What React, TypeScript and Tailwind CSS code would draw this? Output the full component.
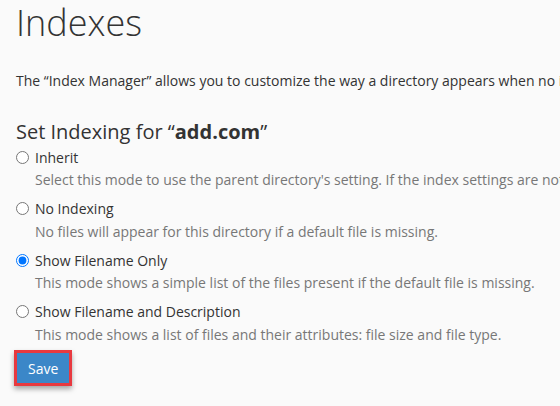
import { useState } from 'react'

const modes = [
    {
        id: 'inherit',
        label: 'Inherit',
        desc: "Select this mode to use the parent directory's setting. If the index settings are not defined in the parent directory, the system will use its default settings.",
    },
    {
        id: 'none',
        label: 'No Indexing',
        desc: 'No files will appear for this directory if a default file is missing.',
    },
    {
        id: 'filename',
        label: 'Show Filename Only',
        desc: 'This mode shows a simple list of the files present if the default file is missing.',
    },
    {
        id: 'description',
        label: 'Show Filename and Description',
        desc: 'This mode shows a list of files and their attributes: file size and file type.',
    },
]

export default function App() {
    const [mode, setMode] = useState('filename')

    return (
        <div className="min-h-[406px] bg-[#fafafa] overflow-hidden font-['Open_Sans',sans-serif] text-[#333] pl-4">
            <h1 className="text-[36px] font-light leading-[40px] pt-[3px] text-[#333] whitespace-nowrap">Indexes</h1>
            <p className="text-[14px] leading-5 mt-[28px] whitespace-nowrap">
                The “Index Manager” allows you to customize the way a directory appears when no index file exists.
            </p>
            <h2 className="text-[20px] leading-[26px] mt-[28px] whitespace-nowrap">
                Set Indexing for “<b className="font-bold">add.com</b>”
            </h2>
            <div className="mt-[2px] flex flex-col">
                {modes.map((m) => (
                    <label key={m.id} className="flex flex-col h-[51.5px] cursor-pointer">
                        <span className="flex items-center h-5 text-[14px] text-[#333] whitespace-nowrap">
                            <input
                                type="radio"
                                name="indexing"
                                checked={mode === m.id}
                                onChange={() => setMode(m.id)}
                                className="m-0 mr-[6px] w-[13px] h-[13px] accent-[#0075ff]"
                            />
                            {m.label}
                        </span>
                        <span className="pl-[19px] mt-[3px] text-[14px] leading-5 text-[#777] whitespace-nowrap">{m.desc}</span>
                    </label>
                ))}
            </div>
            <div className="mt-[-3px]">
                <button className="border-[3px] border-[#e8393f] bg-[#3b87c8] text-white text-[14px] px-[11px] h-[36px] -ml-[2px] shadow-[0_3px_5px_rgba(0,0,0,0.35)]">
                    Save
                </button>
            </div>
        </div>
    )
}
